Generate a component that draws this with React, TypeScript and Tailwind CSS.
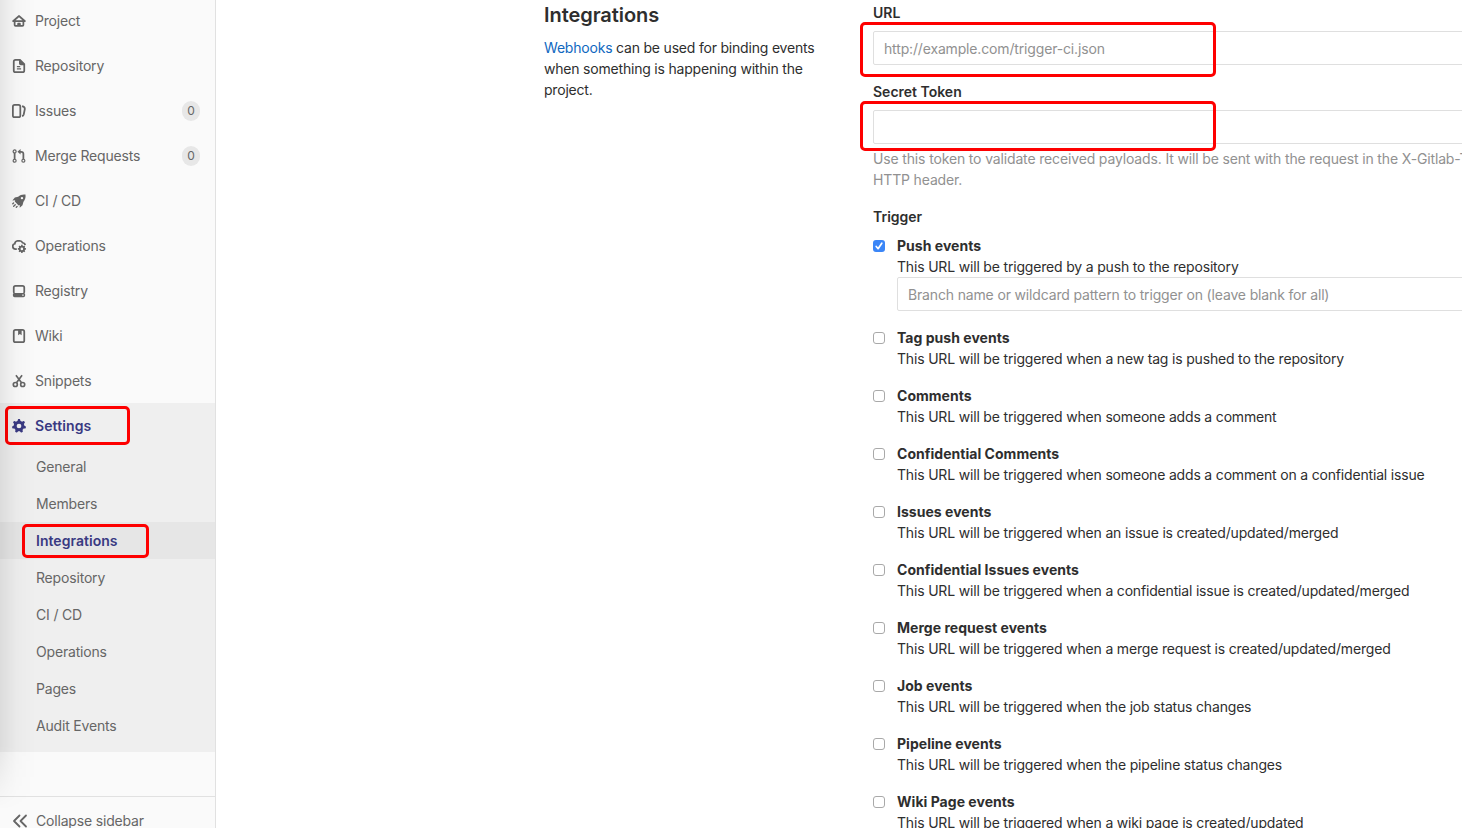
import type { ReactNode } from "react";

const icons: Record<string, ReactNode> = {
  project: (
    <path
      fillRule="evenodd"
      d="M8.900 1.600a1.400 1.400 0 0 0-1.800 0L.5 7.300A1 1 0 0 0 1.100 9H2v3.500a2 2 0 0 0 2 2h8a2 2 0 0 0 2-2V9h.9a1 1 0 0 0 .6-1.700L8.900 1.600zM8 3.600 11.900 7H4.100L8 3.600zM4 9h8v3.500h-2V11a1 1 0 0 0-1-1H7a1 1 0 0 0-1 1v1.500H4V9z"
    />
  ),
  repository: (
    <path
      fillRule="evenodd"
      d="M4 0h5.500L15 5.500V13a3 3 0 0 1-3 3H4a3 3 0 0 1-3-3V3a3 3 0 0 1 3-3zm0 2a1 1 0 0 0-1 1v10a1 1 0 0 0 1 1h8a1 1 0 0 0 1-1V7h-3a2 2 0 0 1-2-2V2H4zm1.600 6h3.800v1.400H5.600V8zm0 2.700h4.800v1.400H5.600v-1.400z"
    />
  ),
  issues: (
    <g fill="none" stroke="currentColor" strokeWidth="2">
      <rect x="1" y="1" width="8.500" height="14" rx="2" />
      <path d="M11.500 2.500c2.700.7 3.500 1.500 3.100 3.500l-1.200 6c-.3 1.200-.8 1.600-1.900 1.800" />
    </g>
  ),
  merge: (
    <g fill="none" stroke="currentColor" strokeWidth="1.400">
      <circle cx="3" cy="2.800" r="1.700" />
      <circle cx="3" cy="13.400" r="1.700" />
      <circle cx="13" cy="13.400" r="1.700" />
      <path strokeWidth="2" d="M3 4.500v7.200M13 11.700V5.500c0-1.500-1-2.300-2.500-2.300H8.500" />
      <path fill="currentColor" stroke="none" d="M9.800 0v6.400L6.200 3.200z" />
    </g>
  ),
  cicd: (
    <>
      <path
        fillRule="evenodd"
        d="M15.400.6C11.900.2 9.300 1.100 7.100 3.100L3.300 4.100.4 7.400l3.300-.2-.5 1.500 4.300 4.300 1.400-.4-.1 3.100 3.200-2.900 1-3.800c2-2.200 2.900-4.900 2.400-8.400zM11.400 3.300a1.400 1.400 0 1 1 0 2.800 1.400 1.400 0 0 1 0-2.800z"
      />
      <path fill="none" stroke="currentColor" strokeWidth="1.500" strokeLinecap="round" d="M1.800 10.200.9 11.100M3.700 12.300 1.900 14.100M5.800 14.200l-.9.900" />
    </>
  ),
  operations: (
    <g fill="none" stroke="currentColor">
      <path strokeWidth="2" d="M5.500 11.500H4a3.100 3.100 0 0 1-.8-6.100A3.700 3.700 0 0 1 6.400 2h2.300a4 4 0 0 1 3.500 2.300c1.700.3 2.700 1.400 2.800 2.700" />
      <circle cx="11.300" cy="11.300" r="2.500" strokeWidth="2" />
      <path strokeWidth="1.800" d="M11.300 6.700V9M11.300 13.600v2.300M6.700 11.300H9M13.600 11.300h2.300M8.100 8.100l1.500 1.500M13 13l1.500 1.500M14.500 8.100 13 9.600M9.600 13l-1.500 1.500" />
    </g>
  ),
  registry: (
    <path
      fillRule="evenodd"
      d="M4 1h8a3 3 0 0 1 3 3v5a2 2 0 0 1-.8 1.600c.5.300.8.800.8 1.300V13a2 2 0 0 1-2 2H3a2 2 0 0 1-2-2v-1.100c0-.5.300-1 .8-1.300A2 2 0 0 1 1 9V4a3 3 0 0 1 3-3zm0 2a1 1 0 0 0-1 1v5.300a1 1 0 0 0 1 1h8a1 1 0 0 0 1-1V4a1 1 0 0 0-1-1H4zm7.700 9v1.300h1.600V12h-1.600z"
    />
  ),
  wiki: (
    <path
      fillRule="evenodd"
      d="M4 0h8a3 3 0 0 1 3 3v10a3 3 0 0 1-3 3H4a3 3 0 0 1-3-3V3a3 3 0 0 1 3-3zm0 2a1 1 0 0 0-1 1v10a1 1 0 0 0 1 1h8a1 1 0 0 0 1-1V3a1 1 0 0 0-1-1h-1v5L9 5.700 7 7V2H4z"
    />
  ),
  snippets: (
    <g fill="none" stroke="currentColor" strokeWidth="1.900">
      <circle cx="3.800" cy="12" r="2.300" />
      <circle cx="12.200" cy="12" r="2.300" />
      <path d="M4.500 1.500 10.900 10M11.500 1.500 5.100 10" />
    </g>
  ),
  settings: (
    <path
      fillRule="evenodd"
      d="M2.415 5.803L1.317 4.084A.5.5 0 0 1 1.350 3.500l.805-.994a.5.5 0 0 1 .564-.153l1.878.704a5.975 5.975 0 0 1 1.650-.797L6.885.342A.5.5 0 0 1 7.360 0h1.280a.5.5 0 0 1 .474.342l.639 1.918a5.970 5.970 0 0 1 1.650.797l1.877-.704a.5.5 0 0 1 .565.153l.805.994a.5.5 0 0 1 .032.584l-1.097 1.719c.217.551.354 1.143.399 1.760l1.731 1.058a.5.5 0 0 1 .227.540l-.288 1.246a.5.5 0 0 1-.440.385l-2.008.190a6.026 6.026 0 0 1-1.142 1.431l.265 1.995a.5.5 0 0 1-.277.516l-1.150.560a.5.5 0 0 1-.576-.100l-1.424-1.452a6.047 6.047 0 0 1-1.804 0l-1.425 1.453a.5.5 0 0 1-.576.100l-1.150-.561a.5.5 0 0 1-.276-.516l.265-1.995a6.026 6.026 0 0 1-1.143-1.430l-2.008-.191a.5.5 0 0 1-.440-.385L.058 9.160a.5.5 0 0 1 .226-.539l1.732-1.058a5.968 5.968 0 0 1 .399-1.760zM8 10.700a2.700 2.700 0 1 0 0-5.400 2.700 2.700 0 0 0 0 5.400z"
    />
  ),
};

function Icon({ name }: { name: string }) {
  return (
    <svg viewBox="0 0 16 16" className="size-[14px] shrink-0" fill="currentColor">
      {icons[name]}
    </svg>
  );
}

const nav = [
  { icon: "project", label: "Project" },
  { icon: "repository", label: "Repository" },
  { icon: "issues", label: "Issues", count: 0 },
  { icon: "merge", label: "Merge Requests", count: 0 },
  { icon: "cicd", label: "CI / CD" },
  { icon: "operations", label: "Operations" },
  { icon: "registry", label: "Registry" },
  { icon: "wiki", label: "Wiki" },
  { icon: "snippets", label: "Snippets" },
];

const settingsNav = ["General", "Members", "Integrations", "Repository", "CI / CD", "Operations", "Pages", "Audit Events"];

const triggers = [
  { title: "Push events", text: "This URL will be triggered by a push to the repository", checked: true, branch: true },
  { title: "Tag push events", text: "This URL will be triggered when a new tag is pushed to the repository" },
  { title: "Comments", text: "This URL will be triggered when someone adds a comment" },
  { title: "Confidential Comments", text: "This URL will be triggered when someone adds a comment on a confidential issue" },
  { title: "Issues events", text: "This URL will be triggered when an issue is created/updated/merged" },
  { title: "Confidential Issues events", text: "This URL will be triggered when a confidential issue is created/updated/merged" },
  { title: "Merge request events", text: "This URL will be triggered when a merge request is created/updated/merged" },
  { title: "Job events", text: "This URL will be triggered when the job status changes" },
  { title: "Pipeline events", text: "This URL will be triggered when the pipeline status changes" },
  { title: "Wiki Page events", text: "This URL will be triggered when a wiki page is created/updated" },
];

function Highlight({ className }: { className: string }) {
  return <div className={`pointer-events-none absolute rounded-[5px] border-3 border-[#fe0000] ${className}`} />;
}

function Sidebar() {
  return (
    <aside className="relative flex h-full w-[216px] shrink-0 flex-col overflow-hidden border-r border-[#e1e1e1] bg-[#fafafa] tracking-[-0.18px] text-[#666666]">
      <nav className="-mt-[2px]">
        {nav.map((item) => (
          <div key={item.label} className="flex h-[45px] items-center pr-[15px] pl-3">
            <Icon name={item.icon} />
            <span className="ml-[9px] flex-1">{item.label}</span>
            {item.count !== undefined && (
              <span className="flex h-5 w-[18px] items-center justify-center rounded-full bg-[#e7e7e7] text-xs tracking-normal">{item.count}</span>
            )}
          </div>
        ))}
        <div className="bg-[#efefef] pb-2">
          <div className="relative flex h-[45px] items-center pl-3 font-semibold tracking-[0.1px] text-[#393982]">
            <Icon name="settings" />
            <span className="ml-[9px]">Settings</span>
            <Highlight className="top-[3px] left-[5px] h-[39px] w-[125px]" />
          </div>
          {settingsNav.map((label) =>
            label === "Integrations" ? (
              <div key={label} className="relative flex h-[37px] items-center bg-[#e6e6e6] pl-9 font-semibold tracking-[0.03px] text-[#393982]">
                {label}
                <Highlight className="top-[2px] left-[22px] h-[34px] w-[127px]" />
              </div>
            ) : (
              <div key={label} className="flex h-[37px] items-center pl-9">
                {label}
              </div>
            ),
          )}
        </div>
      </nav>
      <div className="mt-11 flex h-[48px] shrink-0 items-center border-t border-[#e1e1e1] pl-3">
        <svg viewBox="0 0 16 16" className="size-4" fill="none" stroke="currentColor" strokeWidth="1.800" strokeLinecap="round" strokeLinejoin="round">
          <path d="M7.500 2.500 2 8l5.500 5.500M14 2.500 8.500 8l5.500 5.500" />
        </svg>
        <span className="ml-2">Collapse sidebar</span>
      </div>
      <div className="pointer-events-none absolute top-0 left-0 h-[810px] w-9 bg-linear-to-r from-black/8 via-black/2 via-45% to-transparent mask-b-from-[745px] mask-b-to-[810px]" />
    </aside>
  );
}

function Field({ placeholder }: { placeholder?: string }) {
  return (
    <input
      placeholder={placeholder}
      className="block h-[34px] w-full rounded-[2px] border border-[#dfdfdf] bg-white px-[10px] tracking-[-0.155px] outline-none placeholder:text-[#919191]"
    />
  );
}

export default function App() {
  return (
    <div className="flex h-[828px] w-[1462px] overflow-hidden bg-white font-['Inter','Liberation_Sans',sans-serif] text-sm leading-[21px] text-[#2e2e2e]">
      <Sidebar />
      <main className="flex min-w-0 flex-1 pl-[328px]">
        <section className="w-[329px] shrink-0 pr-[50px]">
          <h4 className="mt-[3px] text-xl leading-6 font-semibold tracking-[-0.06px]">Integrations</h4>
          <p className="mt-[10px] tracking-[-0.2px]">
            <a className="text-[#1068bf]">Webhooks</a> can be used for binding events
            <br />
            when something is happening within the
            <br />
            project.
          </p>
        </section>
        <form className="w-[650px] shrink-0 pt-[2px]">
          <div className="relative">
            <label className="block font-semibold">URL</label>
            <div className="mt-2">
              <Field placeholder="http://example.com/trigger-ci.json" />
            </div>
            <Highlight className="top-[20px] -left-[13px] h-[55px] w-[356px]" />
          </div>
          <div className="relative mt-4">
            <label className="block font-semibold">Secret Token</label>
            <div className="mt-2">
              <Field />
            </div>
            <p className="mt-1 tracking-[-0.15px] whitespace-nowrap text-[#919191]">
              Use this token to validate received payloads. It will be sent with the request in the X-Gitlab-Token
              <br />
              HTTP header.
            </p>
            <Highlight className="top-[20px] -left-[13px] h-[50px] w-[356px]" />
          </div>
          <div className="mt-4 font-semibold">Trigger</div>
          <div className="mt-2 flex flex-col gap-4">
            {triggers.map((t) => (
              <div key={t.title} className="flex">
                <span
                  className={`mt-[5px] mr-3 flex size-3 shrink-0 items-center justify-center rounded-[3px] ${
                    t.checked ? "bg-[#3b86f7]" : "border border-[#a9a9a9] bg-white"
                  }`}
                >
                  {t.checked && (
                    <svg viewBox="0 0 12 12" className="size-3" fill="none" stroke="white" strokeWidth="1.700" strokeLinecap="round" strokeLinejoin="round">
                      <path d="M3.200 6.500 5.100 8.700 8.800 3.200" />
                    </svg>
                  )}
                </span>
                <div className="flex-1">
                  <div className="font-bold tracking-[0.03px]">{t.title}</div>
                  <div className="tracking-[-0.18px] whitespace-nowrap">{t.text}</div>
                  {t.branch && <Field placeholder="Branch name or wildcard pattern to trigger on (leave blank for all)" />}
                </div>
              </div>
            ))}
          </div>
        </form>
      </main>
    </div>
  );
}
